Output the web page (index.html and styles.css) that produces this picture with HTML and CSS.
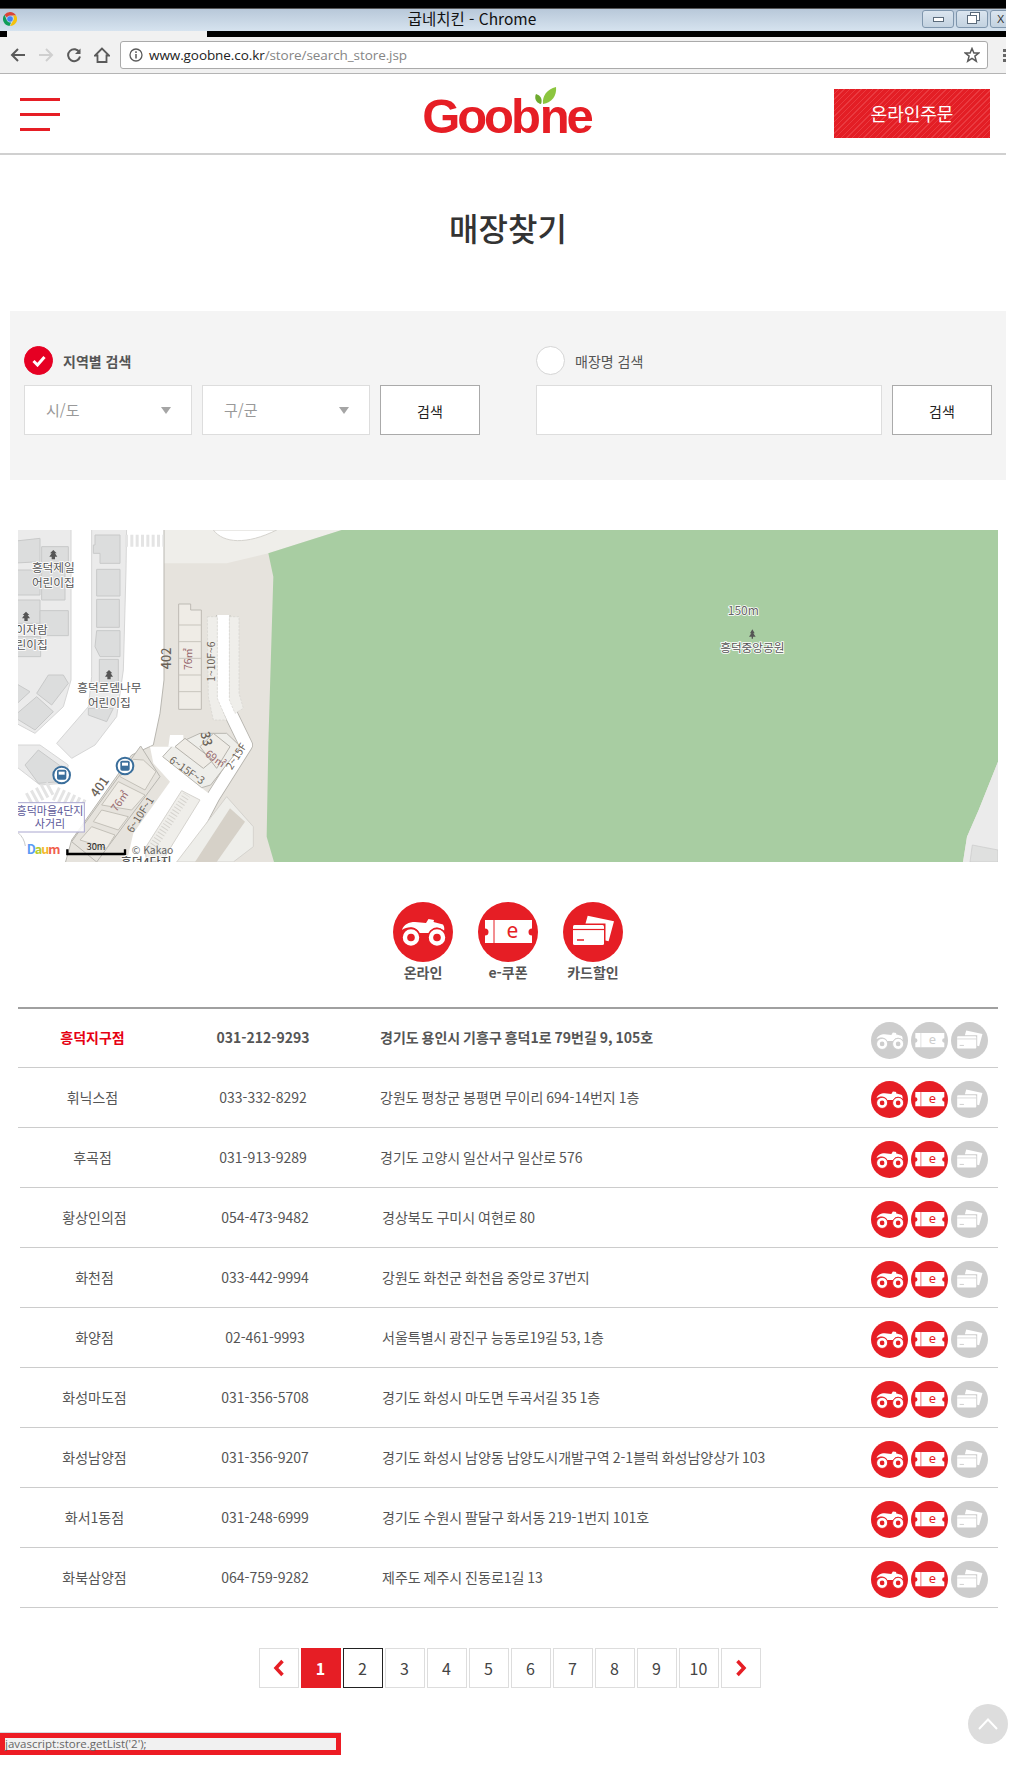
FILE: index.html
```html
<!DOCTYPE html>
<html lang="ko">
<head>
  <meta charset="UTF-8">
  <title>굽네치킨 - 매장찾기</title>
  <link rel="stylesheet" href="styles.css">
</head>
<body>
  <svg class="defs" width="0" height="0">
    <symbol id="ico-bike" viewBox="0 0 60 60">
      <circle cx="30" cy="30" r="30" fill="currentColor"/>
      <path fill="#fff" d="M9 28C10.500 22.500 16 20 22 20L33 21 35.500 17 41 18 40.500 20 50 22.500C51.500 25 51.500 27 51 29 46 23.500 39 24.500 36 31H26.500C24 24.500 15 23.500 9 28Z"/>
      <circle cx="18" cy="35.500" r="9" fill="#fff" stroke="currentColor" stroke-width="1.500"/><circle cx="18" cy="35.500" r="3.800" fill="currentColor"/>
      <circle cx="44" cy="35.500" r="9" fill="#fff" stroke="currentColor" stroke-width="1.500"/><circle cx="44" cy="35.500" r="3.800" fill="currentColor"/>
    </symbol>
    <symbol id="ico-ticket" viewBox="0 0 60 60">
      <circle cx="30" cy="30" r="30" fill="currentColor"/>
      <path fill="#fff" d="M7 18H54V26.500A3.500 3.500 0 0 0 54 33.500V41H7V33.500A3.500 3.500 0 0 0 7 26.500Z"/>
      <path stroke="currentColor" stroke-width="1" d="M16 18V41"/>
      <text x="34.500" y="36" class="ico-e" fill="currentColor">e</text>
    </symbol>
    <symbol id="ico-card" viewBox="0 0 60 60">
      <circle cx="30" cy="30" r="30" fill="currentColor"/>
      <path fill="#fff" d="M24.700 13.700 51 19.300 45.600 39.300 42.500 38.500V21.500H22.500Z"/>
      <rect x="10" y="23" width="31" height="20" rx="1.500" fill="#fff"/>
      <path stroke="currentColor" stroke-width="1.200" d="M10 27.500H41"/>
      <path stroke="currentColor" stroke-width="1.500" d="M14 38H21"/>
    </symbol>
  </svg>

  <div class="window-top"></div>
  <div class="titlebar">
    <svg class="chrome-logo" viewBox="0 0 14 14" width="14" height="14">
      <path fill="#db4437" d="M7 0A7 7 0 0 1 13.100 3.500H7A3.500 3.500 0 0 0 3.800 5.600L1.500 2.700A7 7 0 0 1 7 0Z"/>
      <path fill="#f4c20d" d="M13.100 3.500A7 7 0 0 1 7 14L10 8.800A3.500 3.500 0 0 0 9.600 3.500Z"/>
      <path fill="#0f9d58" d="M1.500 2.700 4 8.800A3.500 3.500 0 0 0 8 10.400L6.500 14A7 7 0 0 1 1.500 2.700Z"/>
      <circle cx="7" cy="7" r="2.800" fill="#4285f4"/>
    </svg>
    <span class="window-title">굽네치킨 - Chrome</span>
    <div class="window-buttons">
      <span class="win-btn"><i class="win-min"></i></span>
      <span class="win-btn"><i class="win-restore"></i></span>
      <span class="win-btn win-close">X</span>
    </div>
  </div>
  <div class="tabstrip"><div class="tab"></div></div>
  <div class="toolbar">
    <svg class="nav-ico" viewBox="0 0 16 16" width="16" height="16"><path d="M15 8H2M8 2 2 8l6 6" fill="none" stroke="#5a5a5a" stroke-width="2"/></svg>
    <svg class="nav-ico nav-fwd" viewBox="0 0 16 16" width="16" height="16"><path d="M1 8H14M8 2l6 6-6 6" fill="none" stroke="#cfcfcf" stroke-width="2"/></svg>
    <svg class="nav-ico" viewBox="0 0 16 16" width="16" height="16"><path d="M13.500 5.500A6 6 0 1 0 14 9.500" fill="none" stroke="#5a5a5a" stroke-width="2"/><path d="M14.500 1.500V7H9Z" fill="#5a5a5a"/></svg>
    <svg class="nav-ico" viewBox="0 0 16 16" width="16" height="16"><path d="M8 1.500 1 8.500H3.500V15H12.500V8.500H15Z" fill="none" stroke="#5a5a5a" stroke-width="1.800"/></svg>
    <div class="omnibox">
      <svg viewBox="0 0 14 14" width="14" height="14"><circle cx="7" cy="7" r="6" fill="none" stroke="#5a5a5a" stroke-width="1.300"/><path d="M7 6V10.500M7 3.300V5" stroke="#5a5a5a" stroke-width="1.500"/></svg>
      <span class="url">www.goobne.co.kr<span class="url-path">/store/search_store.jsp</span></span>
      <svg class="star" viewBox="0 0 16 16" width="16" height="16"><path d="M8 1.500 9.900 6H14.800L10.900 9.100 12.300 14.200 8 11.300 3.700 14.200 5.100 9.100 1.200 6H6.100Z" fill="none" stroke="#5a5a5a" stroke-width="1.500"/></svg>
    </div>
    <div class="menu-dots"></div>
  </div>

  <header class="site-header">
    <div class="hamburger"><span></span><span></span><span class="short"></span></div>
    <div class="logo">
      <span>Goob</span><span class="logo-ne">ne</span>
      <svg class="leaf" viewBox="0 0 22 18" width="22" height="18">
        <path fill="#8cc63f" d="M8 17C7 9 12 2 21 0 22 8 17 16 8 17Z"/>
        <path fill="#6eaa2e" d="M6 17C1 16-1 11 1 7 5 8 8 12 6 17Z"/>
      </svg>
    </div>
    <a class="order-btn">온라인주문</a>
  </header>

  <main class="content">
    <h1>매장찾기</h1>

    <section class="search-panel">
      <div class="search-col">
        <div class="radio-row">
          <span class="radio checked"><svg viewBox="0 0 14 12" width="14" height="12"><path d="M1.500 6 5.500 10 12.500 2" fill="none" stroke="#fff" stroke-width="3"/></svg></span>
          <label class="radio-label selected">지역별 검색</label>
        </div>
        <div class="controls">
          <div class="select">시/도</div>
          <div class="select">구/군</div>
          <button class="search-btn">검색</button>
        </div>
      </div>
      <div class="search-col">
        <div class="radio-row">
          <span class="radio"></span>
          <label class="radio-label">매장명 검색</label>
        </div>
        <div class="controls">
          <input class="store-input" type="text">
          <button class="search-btn">검색</button>
        </div>
      </div>
    </section>

    <div class="map">
      <svg viewBox="54 30 2940 996" width="980" height="332">
        <rect x="54" y="30" width="2940" height="996" fill="#e6e3dd"/>
        <path fill="#efeeea" d="M492 30H1025L805 100 680 130H492Z"/>
        <path fill="#fff" stroke="#d5d3ce" stroke-width="3" d="M640 30C670 70 740 75 830 30Z"/>
        <path fill="#a8cda2" d="M1025 30H2994V725L2936 870 2901 950 2889 1026H822L800 950 805 670 820 170 805 100Z"/>
        <path fill="#ebebeb" d="M2994 725 2936 870 2901 950 2889 1026H2994Z"/>
        <path fill="#dfe0df" stroke="#c9c9c9" stroke-width="2" d="M2917 975 2994 990V1026H2910Z"/>

        <!-- roads -->
        <path fill="#fff" stroke="#b9b7b1" stroke-width="3" d="M30 10H492V480L480 580 460 675 395 705 215 960 190 1050H30Z"/>
        <path fill="none" stroke="#b5b3ad" stroke-width="42" stroke-linejoin="round" d="M670 285V535L738 675 640 830 530 1040"/>
        <path fill="none" stroke="#fff" stroke-width="37" stroke-linejoin="round" d="M670 285V535L738 675 640 830 530 1040"/>

        <!-- left blocks -->
        <path fill="#ebebeb" stroke="#d6d6d6" stroke-width="3" d="M30 10H213V480L190 560 105 640 30 600Z"/>
        <path fill="#ebebeb" stroke="#d6d6d6" stroke-width="3" d="M275 10H380L378 150 370 450 350 590 285 675 215 715 170 670 265 560 275 470Z"/>
        <path fill="#ebebeb" stroke="#d6d6d6" stroke-width="3" d="M30 675H120L205 735 190 790 120 795 30 725Z"/>
        <g fill="#dcdddd" stroke="#c8c9c9" stroke-width="3">
          <path d="M30 65 120 55V125L30 130Z"/><path d="M125 80H205V130H125Z"/><path d="M30 150H120V225H30Z"/><path d="M125 135H195V240H125Z"/>
          <path d="M30 240H120V310H30Z"/><path d="M120 272H205V347H120Z"/><path d="M30 350H122V410H30Z"/>
          <path d="M145 465H190L205 490 155 555 110 520Z"/><path d="M110 530 160 575 105 630 40 590Z"/><path d="M30 480 90 515 30 570Z"/>
          <path d="M285 45H360V130H300V100H280V75H285Z"/><path d="M290 148H360V228H290Z"/><path d="M290 238H358V322H290Z"/>
          <path d="M290 332H360V410H300L285 380Z"/><path d="M298 418H355V490H298Z"/><path d="M265 565H340L320 605 265 585Z"/>
          <path d="M75 735 115 690 205 755 180 785 115 790Z"/>
        </g>
        <path stroke="#e4e4e4" stroke-width="36" stroke-dasharray="9 7" fill="none" d="M375 62H490"/>
        <path stroke="#e4e4e4" stroke-width="42" stroke-dasharray="9 8" fill="none" d="M85 840 160 800M165 820 250 860"/>
        <path fill="none" stroke="#c9c9c9" stroke-width="3" d="M54 938C66 948 74 962 76 978"/>

        <!-- centre buildings -->
        <path fill="#efece6" stroke="#bdbab3" stroke-width="3" d="M536 252H572V270H604V568H536Z"/>
        <path stroke="#c8c5bd" stroke-width="3" d="M536 315H604M536 365H604M536 415H604M536 465H604M536 515H604"/>
        <path fill="#efeeea" stroke="#d5d3ce" stroke-width="2" stroke-dasharray="7 4" d="M622 290H652V535L680 600H640L625 530ZM688 290H717V520L730 565 705 580 688 540Z"/>
        <path fill="#fff" d="M450 680H525L570 660 600 800 640 830 570 1026H380L400 940 510 785 460 730Z"/>
        <path fill="#eeeeea" stroke="#b9b7b1" stroke-width="3" d="M488 710 520 675 552 662 600 640 680 640 722 680 632 795 605 803 Z"/>
        <path fill="#fff" d="M510 645H550V665L525 680H505Z"/>
        <path fill="#efece6" stroke="#b5b2ab" stroke-width="3" d="M525 680 555 655 640 720 610 745ZM600 680 640 640 690 680 650 745Z"/>
        <path fill="#e6e3dd" stroke="#b9b7b1" stroke-width="3" d="M422 678 480 770 290 1026 215 965Z"/>
        <path fill="#efece6" stroke="#c4c1b9" stroke-width="3" d="M400 718 430 720 468 755 435 810 360 770ZM355 785 435 825 395 870 305 855ZM305 870 385 890 355 930 280 905ZM275 920 345 945 320 985 240 960Z"/>
        <path fill="#efeeea" stroke="#d5d3ce" stroke-width="3" d="M435 985 545 812 600 840 485 1026H440Z"/>
        <path stroke="#d5d3ce" stroke-width="24" stroke-dasharray="3 7" fill="none" d="M455 985 560 825"/>
        <path fill="#eeeeea" stroke="#d5d3ce" stroke-width="3" d="M680 830 760 920V980L700 1026H530Z"/>
        <path fill="#d6d1c8" d="M690 865 735 905 650 1026H585Z"/>

        <!-- labels -->
        <g class="map-label">
          <text x="160" y="157">흥덕제일</text><text x="160" y="201">어린이집</text>
          <text x="143" y="343" class="to-end">아이자람</text><text x="143" y="386" class="to-end">어린이집</text>
          <text x="328" y="517">흥덕로뎀나무</text><text x="328" y="561">어린이집</text>
          <text x="2257" y="395">흥덕중앙공원</text>
          <text x="2230" y="284" class="small-num">150m</text>
        </g>
        <g fill="#555">
          <path d="M160 90 170 100H165L172 110H165V118H155V110H148L155 100H150Z"/>
          <path d="M78 275 88 285H83L90 295H83V303H73V295H66L73 285H68Z"/>
          <path d="M327 450 337 460H332L339 470H332V478H322V470H315L322 460H317Z"/>
          <path d="M2257 328 2264 340H2260L2267 350H2259V356H2255V350H2247L2254 340H2250Z"/>
        </g>
        <g class="map-num">
          <text transform="translate(514 415) rotate(-90)">402</text>
          <text transform="translate(310 808) rotate(-55)" >401</text>
          <text transform="translate(606 660) rotate(75)">33</text>
        </g>
        <g class="map-sub">
          <text transform="translate(645 425) rotate(-90)">1~10F~6</text>
          <text transform="translate(718 715) rotate(-58)">2~15F</text>
          <text transform="translate(555 760) rotate(35)">6~15F~3</text>
          <text transform="translate(430 890) rotate(-57)">6~10F~1</text>
        </g>
        <g class="map-area">
          <text transform="translate(575 417) rotate(-90)">76㎡</text>
          <text transform="translate(368 850) rotate(-55)">76㎡</text>
          <text transform="translate(640 725) rotate(35)">69㎡</text>
        </g>
        <g>
          <circle cx="185" cy="765" r="25" fill="#fff" stroke="#3a6e9b" stroke-width="6"/><rect x="171" y="749" width="28" height="30" rx="5" fill="#3a6e9b"/><rect x="176" y="755" width="18" height="9" fill="#fff"/>
          <circle cx="375" cy="738" r="25" fill="#fff" stroke="#3a6e9b" stroke-width="6"/><rect x="361" y="722" width="28" height="30" rx="5" fill="#3a6e9b"/><rect x="366" y="728" width="18" height="9" fill="#fff"/>
        </g>
        <rect x="40" y="848" width="213" height="88" fill="#fff" fill-opacity=".85" stroke="#a9a6cf" stroke-width="3"/>
        <g class="map-cross">
          <text x="150" y="884">흥덕마을4단지</text><text x="150" y="923">사거리</text>
        </g>
        <g class="map-daum">
          <text x="80" y="1003"><tspan fill="#5b9bf5">D</tspan><tspan fill="#b6cc2c">a</tspan><tspan fill="#f5b82e">u</tspan><tspan fill="#f0604d">m</tspan></text>
        </g>
        <path fill="none" stroke="#000" stroke-width="7" d="M202 988V1002H375V988"/>
        <text x="288" y="990" class="map-scale">30m</text>
        <text x="395" y="1003" class="map-copy">© Kakao</text>
        <text x="362" y="1040" class="map-clip">흥덕4단지</text>
      </svg>
    </div>

    <div class="legend">
      <div class="legend-item"><svg class="on" width="60" height="60"><use href="#ico-bike"/></svg><span>온라인</span></div>
      <div class="legend-item"><svg class="on" width="60" height="60"><use href="#ico-ticket"/></svg><span>e-쿠폰</span></div>
      <div class="legend-item"><svg class="on" width="60" height="60"><use href="#ico-card"/></svg><span>카드할인</span></div>
    </div>

    <div class="store-list">
      <div class="store-row current">
        <div class="store-name">흥덕지구점</div><div class="store-tel">031-212-9293</div><div class="store-addr">경기도 용인시 기흥구 흥덕1로 79번길 9, 105호</div>
        <div class="store-icons"><svg class="off"><use href="#ico-bike"/></svg><svg class="off"><use href="#ico-ticket"/></svg><svg class="off"><use href="#ico-card"/></svg></div>
      </div>
      <div class="store-row">
        <div class="store-name">휘닉스점</div><div class="store-tel">033-332-8292</div><div class="store-addr">강원도 평창군 봉평면 무이리 694-14번지 1층</div>
        <div class="store-icons"><svg class="on"><use href="#ico-bike"/></svg><svg class="on"><use href="#ico-ticket"/></svg><svg class="off"><use href="#ico-card"/></svg></div>
      </div>
      <div class="store-row">
        <div class="store-name">후곡점</div><div class="store-tel">031-913-9289</div><div class="store-addr">경기도 고양시 일산서구 일산로 576</div>
        <div class="store-icons"><svg class="on"><use href="#ico-bike"/></svg><svg class="on"><use href="#ico-ticket"/></svg><svg class="off"><use href="#ico-card"/></svg></div>
      </div>
      <div class="store-row shifted">
        <div class="store-name">황상인의점</div><div class="store-tel">054-473-9482</div><div class="store-addr">경상북도 구미시 여현로 80</div>
        <div class="store-icons"><svg class="on"><use href="#ico-bike"/></svg><svg class="on"><use href="#ico-ticket"/></svg><svg class="off"><use href="#ico-card"/></svg></div>
      </div>
      <div class="store-row shifted">
        <div class="store-name">화천점</div><div class="store-tel">033-442-9994</div><div class="store-addr">강원도 화천군 화천읍 중앙로 37번지</div>
        <div class="store-icons"><svg class="on"><use href="#ico-bike"/></svg><svg class="on"><use href="#ico-ticket"/></svg><svg class="off"><use href="#ico-card"/></svg></div>
      </div>
      <div class="store-row shifted">
        <div class="store-name">화양점</div><div class="store-tel">02-461-9993</div><div class="store-addr">서울특별시 광진구 능동로19길 53, 1층</div>
        <div class="store-icons"><svg class="on"><use href="#ico-bike"/></svg><svg class="on"><use href="#ico-ticket"/></svg><svg class="off"><use href="#ico-card"/></svg></div>
      </div>
      <div class="store-row shifted">
        <div class="store-name">화성마도점</div><div class="store-tel">031-356-5708</div><div class="store-addr">경기도 화성시 마도면 두곡서길 35 1층</div>
        <div class="store-icons"><svg class="on"><use href="#ico-bike"/></svg><svg class="on"><use href="#ico-ticket"/></svg><svg class="off"><use href="#ico-card"/></svg></div>
      </div>
      <div class="store-row shifted">
        <div class="store-name">화성남양점</div><div class="store-tel">031-356-9207</div><div class="store-addr">경기도 화성시 남양동 남양도시개발구역 2-1블럭 화성남양상가 103</div>
        <div class="store-icons"><svg class="on"><use href="#ico-bike"/></svg><svg class="on"><use href="#ico-ticket"/></svg><svg class="off"><use href="#ico-card"/></svg></div>
      </div>
      <div class="store-row shifted">
        <div class="store-name">화서1동점</div><div class="store-tel">031-248-6999</div><div class="store-addr">경기도 수원시 팔달구 화서동 219-1번지 101호</div>
        <div class="store-icons"><svg class="on"><use href="#ico-bike"/></svg><svg class="on"><use href="#ico-ticket"/></svg><svg class="off"><use href="#ico-card"/></svg></div>
      </div>
      <div class="store-row shifted last">
        <div class="store-name">화북삼양점</div><div class="store-tel">064-759-9282</div><div class="store-addr">제주도 제주시 진동로1길 13</div>
        <div class="store-icons"><svg class="on"><use href="#ico-bike"/></svg><svg class="on"><use href="#ico-ticket"/></svg><svg class="off"><use href="#ico-card"/></svg></div>
      </div>
    </div>

    <nav class="pager">
      <a class="arrow"><svg viewBox="0 0 12 18" width="12" height="18"><path d="M9.500 2 3 9l6.500 7" fill="none" stroke="#e61e25" stroke-width="3.500"/></svg></a>
      <a class="active">1</a>
      <a class="focus">2</a>
      <a>3</a><a>4</a><a>5</a><a>6</a><a>7</a><a>8</a><a>9</a><a>10</a>
      <a class="arrow"><svg viewBox="0 0 12 18" width="12" height="18"><path d="M2.500 2 9 9l-6.500 7" fill="none" stroke="#e61e25" stroke-width="3.500"/></svg></a>
    </nav>
  </main>

  <div class="status-line"></div>
  <div class="status-box"><div class="status-text">javascript:store.getList('2');</div></div>

  <a class="to-top"><svg viewBox="0 0 22 14" width="22" height="14"><path d="M2 12 11 2.500 20 12" fill="none" stroke="#fff" stroke-width="2"/></svg></a>
</body>
</html>
```
FILE: styles.css
```css
html, body { margin: 0; padding: 0; }
body { position: relative; width: 1017px; height: 1767px; overflow: hidden; background: #fff; font-family: "Noto Sans CJK KR", "Noto Sans", sans-serif; color: #555; }
.defs { position: absolute; }
svg { display: block; }

/* browser chrome */
.window-top { width: 1006px; height: 9px; background: #000; border-bottom: 1px solid #555; box-sizing: border-box; }
.titlebar { position: relative; width: 1006px; height: 22px; background: linear-gradient(#b8c8d9, #d6e3ef); }
.chrome-logo { position: absolute; left: 3px; top: 3px; }
.window-title { display: block; text-align: center; padding: 0 62px 0 0; font: 15.500px/18px "Noto Sans CJK KR", sans-serif; color: #111; }
.window-buttons { position: absolute; right: 0; top: 1px; display: flex; gap: 2px; overflow: hidden; width: 84px; }
.win-btn { flex: none; display: flex; align-items: center; justify-content: center; width: 32px; height: 18px; border: 1px solid #7f96ad; border-radius: 3px; box-sizing: border-box; background: linear-gradient(#dbe5ef, #c3d2e0); font: 11px "Liberation Sans", sans-serif; color: #333; }
.win-close { justify-content: flex-start; padding-left: 6px; }
.win-min { width: 9px; height: 3px; border: 1px solid #5b6b7b; background: #fff; }
.win-restore { width: 8px; height: 7px; border: 1px solid #5b6b7b; background: #fff; box-shadow: 3px -3px 0 -1px #fff, 3px -3px 0 0 #5b6b7b; }
.tabstrip { width: 1006px; height: 6px; background: #000; padding-left: 7px; box-sizing: border-box; }
.tab { width: 200px; height: 6px; background: #f1f1f1; }
.toolbar { display: flex; align-items: center; width: 1006px; height: 37px; box-sizing: border-box; background: #f1f1f1; border-bottom: 1px solid #b4b4b4; padding-left: 10px; }
.nav-ico { flex: none; margin-right: 12px; }
.nav-ico:nth-child(4) { margin-right: 10px; }
.omnibox { flex: none; display: flex; align-items: center; width: 868px; height: 28px; box-sizing: border-box; padding: 0 7px 0 8px; background: #fff; border: 1px solid #aaa; border-radius: 3px; }
.url { flex: 1; margin-left: 6px; font: 13.500px/18px "Open Sans", sans-serif; color: #222; letter-spacing: -.08px; }
.url-path { color: #858585; }
.menu-dots { width: 3px; height: 3px; margin-left: 15px; background: #666; box-shadow: 0 -5px 0 #666, 0 5px 0 #666; }

/* header */
.site-header { display: grid; grid-template-columns: 1fr auto 1fr; align-items: center; width: 1006px; height: 81px; box-sizing: border-box; padding: 0 16px 0 20px; border-bottom: 2px solid #d0d0d0; }
.hamburger span { display: block; width: 40px; height: 3px; margin-bottom: 12px; background: #e61e25; }
.hamburger span.short { width: 30px; margin-bottom: 0; }
.hamburger { padding-top: 1px; }
.logo { position: relative; margin-left: 3px; padding-top: 5px; font: bold 49px/50px "Liberation Sans", sans-serif; color: #e61e25; letter-spacing: -3.100px; white-space: nowrap; }
.logo-ne { margin-left: 2px; }
.leaf { position: absolute; left: 113px; top: 1px; }
.order-btn { justify-self: end; width: 156px; height: 49px; margin-bottom: 1px; text-align: center; font-size: 18px; line-height: 48px; color: #fff; background: repeating-linear-gradient(135deg, #e31e25 0, #e31e25 3px, #ea3a40 3px, #ea3a40 4px); }

/* content */
.content { width: 996px; padding-left: 10px; }
h1 { margin: 52px 0 64px; text-align: center; font-size: 32px; line-height: 40px; font-weight: 500; color: #333; }
.search-panel { display: grid; grid-template-columns: 456px 456px; column-gap: 56px; height: 169px; box-sizing: border-box; padding: 35px 14px 0; background: #f4f4f4; }
.radio-row { display: flex; align-items: center; gap: 10px; height: 29px; margin-bottom: 10px; }
.radio { display: flex; align-items: center; justify-content: center; width: 29px; height: 29px; box-sizing: border-box; border-radius: 50%; background: #fff; border: 1px solid #d5d5d5; }
.radio.checked { background: #e60023; border-color: #e60023; }
.radio-label { font-size: 14px; color: #555; }
.radio-label.selected { font-weight: 700; }
.controls { display: flex; gap: 10px; }
.select { position: relative; width: 168px; height: 50px; box-sizing: border-box; padding-left: 21px; font-size: 15px; line-height: 48px; color: #999; background: #fff; border: 1px solid #ddd; }
.select::after { content: ""; position: absolute; right: 20px; top: 21px; border: 5.500px solid transparent; border-top: 7px solid #a5a5a5; border-bottom: 0; }
.search-btn { width: 100px; height: 50px; padding: 2px 0 0; font-family: inherit; font-size: 14px; color: #222; background: #fff; border: 1px solid #aaa; }
.store-input { flex: 1; min-width: 0; height: 50px; box-sizing: border-box; background: #fff; border: 1px solid #ddd; }

.map { width: 980px; height: 332px; margin: 50px 0 0 8px; }
.map text { text-anchor: middle; font-family: "Noto Sans CJK KR", sans-serif; }
.map-label text { font-size: 35px; fill: #555; stroke: #fff; stroke-width: 5px; paint-order: stroke; }
.map-label .to-end { text-anchor: end; }
.map-label .small-num { font-size: 36px; fill: #666; }
.map-num text { font-size: 38px; fill: #6a6257; font-weight: 500; }
.map-sub text { font-size: 31px; fill: #6a6257; }
.map-area text { font-size: 31px; fill: #95656b; }
.map-cross text { font-size: 33px; fill: #5c5899; }
.map text.map-scale { font-size: 28px; fill: #222; }
.map text.map-copy { text-anchor: start; font-size: 31px; fill: #666; }
.map text.map-clip { text-anchor: start; font-size: 36px; fill: #555; font-weight: 500; stroke: #fff; stroke-width: 4px; paint-order: stroke; }
.map-daum text { text-anchor: start; font-size: 38px; font-weight: 700; letter-spacing: -3px; }

.on { color: #e61e25; }
.off { color: #cdcdcd; }
.ico-e { text-anchor: middle; font: 21px "Noto Sans", sans-serif; }

.legend { display: flex; justify-content: center; margin-top: 40px; }
.legend-item { display: flex; flex-direction: column; align-items: center; width: 85px; }
.legend-item span { font-size: 14px; line-height: 20px; font-weight: 700; color: #555; }

.store-list { width: 980px; margin: 25px 0 0 8px; }
.store-row { display: grid; grid-template-columns: 149px 192px 1fr auto; align-items: center; height: 60px; box-sizing: border-box; border-top: 1px solid #ccc; font-size: 14px; color: #555; }
.store-row.current { border-top: 2px solid #a0a0a0; font-weight: 700; }
.store-row.current .store-name { color: #e60012; }
.store-row.shifted { margin-left: 2px; }
.store-row.last { height: 61px; border-bottom: 1px solid #ccc; }
.store-name, .store-tel { text-align: center; padding-bottom: 2px; }
.store-addr { padding: 0 0 2px 21px; word-spacing: -1px; }
.store-icons { display: flex; gap: 3px; padding: 4px 10px 0 0; }
.store-icons svg { width: 37px; height: 37px; }

.pager { display: flex; justify-content: center; gap: 2px; margin-top: 40px; padding-left: 3px; }
.pager a { display: flex; align-items: center; justify-content: center; width: 40px; height: 40px; box-sizing: border-box; border: 1px solid #ddd; font-size: 16px; color: #444; }
.pager a.active { background: #e61e25; border-color: #e61e25; color: #fff; font-weight: 700; }
.pager a.focus { border-color: #222; }

.status-line { width: 341px; height: 1px; margin-top: 44px; background: #d5d9e0; }
.status-box { width: 341px; height: 22px; box-sizing: border-box; border: 5px solid #ed1c24; background: #f1f1f1; }
.status-text { font: 11.500px/12px "Open Sans", sans-serif; color: #666; white-space: nowrap; }

.to-top { position: absolute; left: 968px; top: 1704px; display: flex; align-items: center; justify-content: center; width: 40px; height: 40px; border-radius: 50%; background: #ddd; }
```
